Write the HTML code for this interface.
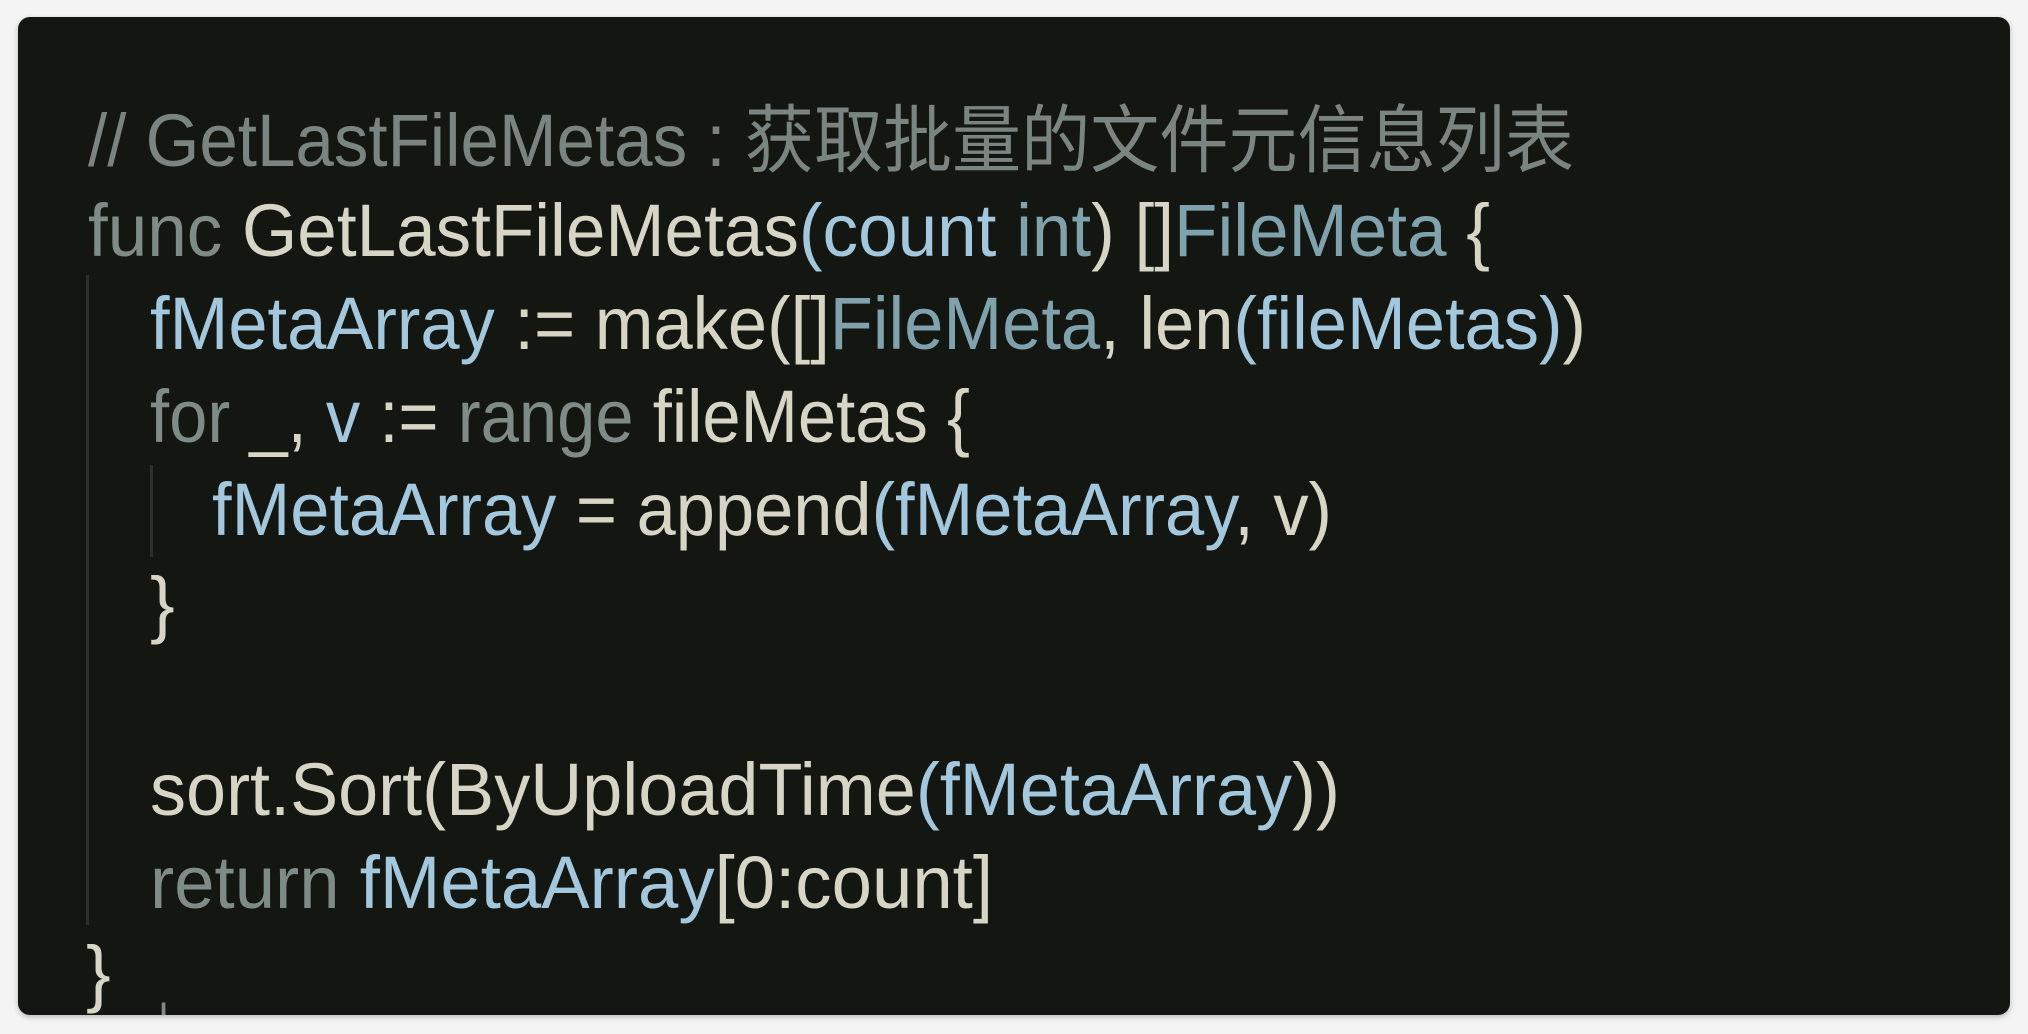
<!DOCTYPE html>
<html><head><meta charset="utf-8"><style>
html,body{margin:0;padding:0;background:#f4f4f4;width:2028px;height:1034px;overflow:hidden}
.panel{position:absolute;left:18px;top:17px;width:1992px;height:998px;background:#141612;border-radius:12px;box-shadow:0 2px 6px rgba(0,0,0,.25);overflow:hidden}
svg{position:absolute;left:0;top:0}
text{font-family:"Liberation Sans","Noto Sans CJK SC",sans-serif;font-size:74px;fill:#d6d5c6}
.k{fill:#7f8b87}.b{fill:#a3c8de}.t{fill:#80a2ad}.c{fill:#7a8581}
</style></head><body>
<div class="panel">
<svg width="1992" height="998" viewBox="18 17 1992 998">
<rect x="86" y="275" width="3" height="650" fill="#2c2f2b"/>
<rect x="150" y="465" width="3" height="92" fill="#2c2f2b"/>
<text x="88" y="166" textLength="1486" lengthAdjust="spacingAndGlyphs" class="c">// GetLastFileMetas : 获取批量的文件元信息列表</text>
<text x="88" y="256" textLength="1402" lengthAdjust="spacingAndGlyphs"><tspan class="k">func</tspan> GetLastFileMetas<tspan class="b">(count</tspan> <tspan class="t">int</tspan>) []<tspan class="t">FileMeta</tspan> {</text>
<text x="150" y="349" textLength="1436" lengthAdjust="spacingAndGlyphs"><tspan class="b">fMetaArray</tspan> := make([]<tspan class="t">FileMeta</tspan>, len<tspan class="b">(fileMetas)</tspan>)</text>
<text x="150" y="442" textLength="820" lengthAdjust="spacingAndGlyphs"><tspan class="k">for</tspan> _, <tspan class="b">v</tspan> := <tspan class="k">range</tspan> fileMetas {</text>
<text x="212" y="535" textLength="1120" lengthAdjust="spacingAndGlyphs"><tspan class="b">fMetaArray</tspan> = append<tspan class="b">(fMetaArray</tspan>, v)</text>
<text x="150" y="629">}</text>
<text x="150" y="815" textLength="1190" lengthAdjust="spacingAndGlyphs">sort.Sort(ByUploadTime<tspan class="b">(fMetaArray</tspan>))</text>
<text x="150" y="908" textLength="843" lengthAdjust="spacingAndGlyphs"><tspan class="k">return</tspan> <tspan class="b">fMetaArray</tspan>[0:count]</text>
<text x="86" y="998">}</text>
<text x="158" y="1030" style="font-size:40px" class="k">I</text>
</svg>
</div>
</body></html>
